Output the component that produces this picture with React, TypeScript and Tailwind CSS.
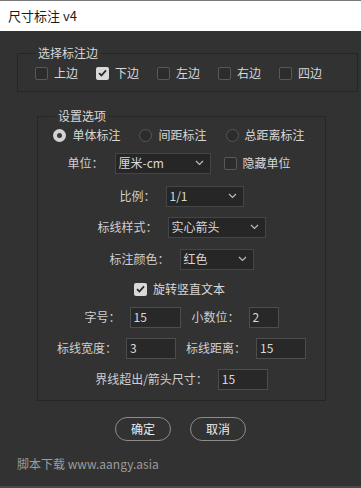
import React from "react";

const Chevron = () => (
  <svg width="9" height="6" viewBox="0 0 9 6" className="shrink-0">
    <path d="M1 1l3.5 3.5L8 1" fill="none" stroke="#bdbdbd" strokeWidth="1.2" />
  </svg>
);

const Check = ({ checked }: { checked?: boolean }) => (
  <span
    className={
      "w-[13px] h-[13px] rounded-[2px] flex items-center justify-center shrink-0 " +
      (checked ? "bg-[#d9d9d9]" : "border border-[#585858] bg-[#2c2c2c]")
    }
  >
    {checked && (
      <svg width="9" height="8" viewBox="0 0 9 8">
        <path d="M1 4.2l2.4 2.3L8 1.3" fill="none" stroke="#2a2a2a" strokeWidth="1.8" />
      </svg>
    )}
  </span>
);

const Radio = ({ checked }: { checked?: boolean }) => (
  <span
    className={
      "w-[13px] h-[13px] rounded-full flex items-center justify-center shrink-0 " +
      (checked ? "bg-[#d4d4d4]" : "border border-[#575757] bg-[#2c2c2c]")
    }
  >
    {checked && <span className="w-[5px] h-[5px] rounded-full bg-[#3a3a3a]" />}
  </span>
);

const Select = ({ value, w }: { value: string; w: string }) => (
  <div
    className={
      "h-[21px] bg-[#262626] border border-[#454545] flex items-center justify-between pl-[3px] pr-[6px] " + w
    }
  >
    <span>{value}</span>
    <Chevron />
  </div>
);

const Input = ({ value, w }: { value: string; w: string }) => (
  <div className={"h-[21px] bg-[#282828] border border-[#4d4d4d] flex items-center pl-[3px] " + w}>
    {value}
  </div>
);

export default function App() {
  return (
    <div
      className="w-[361px] h-[488px] bg-[#323232] flex flex-col text-[12px] leading-[16px] text-[#d8d8d8] border-b-2 border-[#4a4a4a]"
      style={{ fontFamily: '"Noto Sans CJK SC", "Noto Sans", sans-serif' }}
    >
      <div className="h-[31px] bg-white border-t border-[#7a7a7a] flex items-center pl-[8px] text-[13px] text-[#1a1a1a] shrink-0">
        尺寸标注 v4
      </div>

      <fieldset className="ml-[17px] w-[327px] mt-[14px] border border-[#262626] px-[17px] pb-[8px]">
        <legend className="ml-0 px-[3px]">选择标注边</legend>
        <div className="flex items-center h-[20px] mt-[2px]">
          {["上边", "下边", "左边", "右边", "四边"].map((t, i) => (
            <div key={t} className="w-[61px] flex items-center gap-[6px]">
              <Check checked={i === 1} />
              <span>{t}</span>
            </div>
          ))}
        </div>
      </fieldset>

      <fieldset className="ml-[37px] w-[289px] mt-[16px] border border-[#262626] pb-[10px]">
        <legend className="ml-[17px] px-[3px]">设置选项</legend>

        <div className="h-[22px] flex items-center justify-center gap-[19px] pr-[5px]">
          {["单体标注", "间距标注", "总距离标注"].map((t, i) => (
            <div key={t} className="flex items-center gap-[6px]">
              <Radio checked={i === 0} />
              <span>{t}</span>
            </div>
          ))}
        </div>

        <div className="h-[22px] mt-[6px] flex items-center justify-center pr-[5px]">
          <span className="text-[#cfcfcf]">单位：</span>
          <div className="ml-[11px]">
            <Select value="厘米-cm" w="w-[96px]" />
          </div>
          <div className="ml-[13px] flex items-center gap-[6px]">
            <Check />
            <span>隐藏单位</span>
          </div>
        </div>

        <div className="h-[22px] mt-[11px] flex items-center justify-center">
          <span className="text-[#cfcfcf]">比例：</span>
          <div className="ml-[10px]">
            <Select value="1/1" w="w-[78px]" />
          </div>
        </div>

        <div className="h-[22px] mt-[9px] flex items-center justify-center">
          <span className="text-[#cfcfcf]">标线样式：</span>
          <div className="ml-[10px]">
            <Select value="实心箭头" w="w-[98px]" />
          </div>
        </div>

        <div className="h-[22px] mt-[10px] flex items-center justify-center">
          <span className="text-[#cfcfcf]">标注颜色：</span>
          <div className="ml-[10px]">
            <Select value="红色" w="w-[74px]" />
          </div>
        </div>

        <div className="h-[22px] mt-[8px] flex items-center justify-center gap-[6px] pr-[4px]">
          <Check checked />
          <span>旋转竖直文本</span>
        </div>

        <div className="h-[22px] mt-[6px] flex items-center justify-center">
          <span className="text-[#cfcfcf]">字号：</span>
          <div className="ml-[9px]">
            <Input value="15" w="w-[51px]" />
          </div>
          <span className="ml-[11px] text-[#cfcfcf]">小数位：</span>
          <div className="ml-[9px]">
            <Input value="2" w="w-[30px]" />
          </div>
        </div>

        <div className="h-[22px] mt-[9px] flex items-center justify-center">
          <span className="text-[#cfcfcf]">标线宽度：</span>
          <div className="ml-[9px]">
            <Input value="3" w="w-[50px]" />
          </div>
          <span className="ml-[10px] text-[#cfcfcf]">标线距离：</span>
          <div className="ml-[10px]">
            <Input value="15" w="w-[50px]" />
          </div>
        </div>

        <div className="h-[22px] mt-[9px] flex items-center justify-center">
          <span className="text-[#cfcfcf]">界线超出/箭头尺寸：</span>
          <div className="ml-[10px]">
            <Input value="15" w="w-[50px]" />
          </div>
        </div>
      </fieldset>

      <div className="mt-[16px] flex justify-center gap-[19px]">
        <div className="w-[56px] h-[24px] rounded-full border-[1.5px] border-[#8c8c8c] flex items-center justify-center text-[#ececec]">
          确定
        </div>
        <div className="w-[56px] h-[24px] rounded-full border-[1.5px] border-[#8c8c8c] flex items-center justify-center text-[#ececec]">
          取消
        </div>
      </div>

      <div className="mt-[15px] ml-[17px] text-[12px] text-[#9c9c9c]">脚本下载 www.aangy.asia</div>
    </div>
  );
}
